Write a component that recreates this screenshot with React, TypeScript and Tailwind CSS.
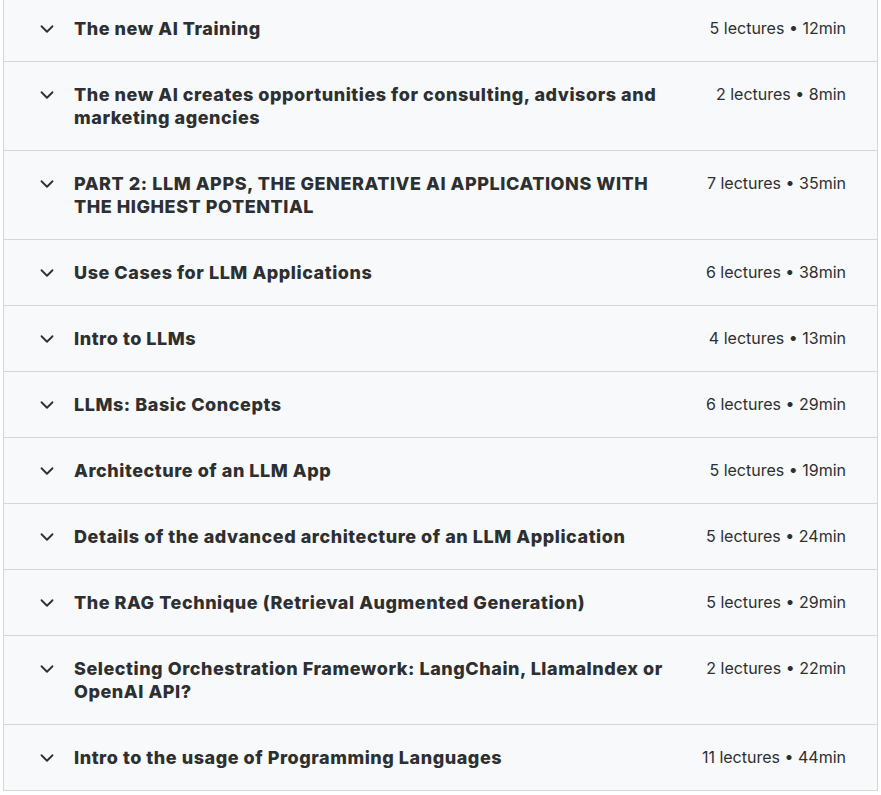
import { ChevronDown } from 'lucide-react';

const sections = [
  { title: 'The new AI Training', lectures: 5, length: '12min' },
  {
    title: 'The new AI creates opportunities for consulting, advisors and marketing agencies',
    lectures: 2,
    length: '8min',
  },
  {
    title: 'PART 2: LLM APPS, THE GENERATIVE AI APPLICATIONS WITH THE HIGHEST POTENTIAL',
    lectures: 7,
    length: '35min',
  },
  { title: 'Use Cases for LLM Applications', lectures: 6, length: '38min' },
  { title: 'Intro to LLMs', lectures: 4, length: '13min' },
  { title: 'LLMs: Basic Concepts', lectures: 6, length: '29min' },
  { title: 'Architecture of an LLM App', lectures: 5, length: '19min' },
  { title: 'Details of the advanced architecture of an LLM Application', lectures: 5, length: '24min' },
  { title: 'The RAG Technique (Retrieval Augmented Generation)', lectures: 5, length: '29min' },
  {
    title: 'Selecting Orchestration Framework: LangChain, LlamaIndex or OpenAI API?',
    lectures: 2,
    length: '22min',
  },
  { title: 'Intro to the usage of Programming Languages', lectures: 11, length: '44min' },
];

export default function App() {
  return (
    <div className="min-h-[795px] bg-white font-['Inter',sans-serif] text-[#2d2f31]">
      <div className="-mt-[5px] ml-[3px] mr-[3px] border border-[#d1d7dc]">
        {sections.map((s, i) => (
          <div
            key={s.title}
            className={`flex items-start gap-8 bg-[#f7f9fa] py-[21px] pl-[32px] pr-[31px] ${
              i > 0 ? 'border-t border-[#d1d7dc]' : ''
            }`}
          >
            <div className="flex flex-1 items-start gap-4">
              <ChevronDown size={22} strokeWidth={2} className="mt-[1px] shrink-0" />
              <h3 className="text-[18px] font-extrabold leading-[23px] tracking-[0.55px]">{s.title}</h3>
            </div>
            <span className="shrink-0 text-[16px] leading-[23px]">
              {s.lectures} lectures • {s.length}
            </span>
          </div>
        ))}
      </div>
    </div>
  );
}
